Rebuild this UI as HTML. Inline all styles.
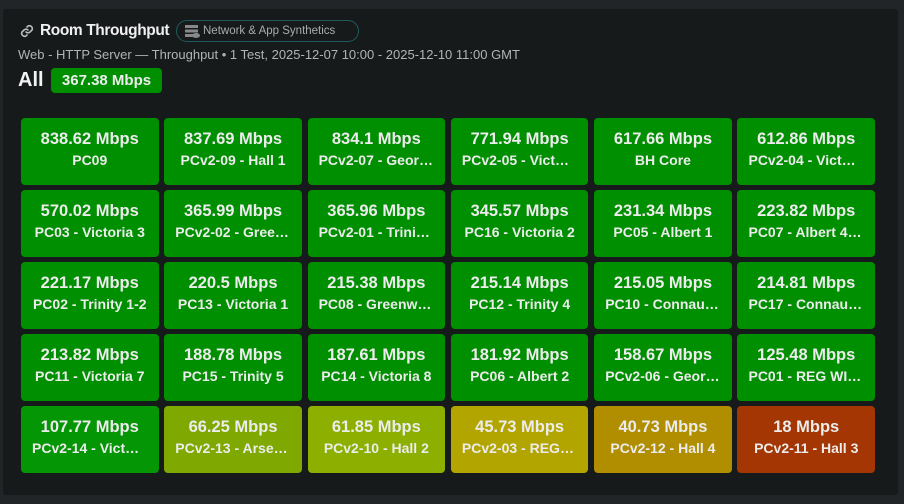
<!DOCTYPE html>
<html><head><style>
*{margin:0;padding:0;box-sizing:border-box}
body{width:904px;height:504px;background:#212527;font-family:"Liberation Sans",sans-serif;position:relative;overflow:hidden}
.panel{position:absolute;left:3px;top:9px;width:895px;height:486px;background:#171a1b;border-radius:3px}
.title{position:absolute;left:19px;top:22px;font-size:15.5px;letter-spacing:-0.4px;font-weight:bold;color:#f0f0f0;display:flex;align-items:center}
.chip{position:absolute;left:176px;top:20px;width:183px;height:22px;border:1px solid #1f5b5e;border-radius:11px;color:#a9acad;font-size:11.5px;line-height:20px;padding-left:26px}
.chip svg{position:absolute;left:8px;top:4px}
.sub{position:absolute;left:18px;top:47px;font-size:13px;color:#b3b3b3}
.all{position:absolute;left:18px;top:69px;font-size:20px;font-weight:bold;color:#f2f2f2}
.badge{position:absolute;left:51px;top:68px;width:111px;height:25px;background:#008f00;border-radius:4px;color:#eee;font-weight:bold;font-size:15px;line-height:25px;text-align:center}
.grid{position:absolute;left:21px;top:118px;display:grid;grid-template-columns:repeat(6,137.5px);grid-auto-rows:67px;column-gap:5.8px;row-gap:5px}
.t{border-radius:4px;color:#ececec;font-weight:bold;text-align:center;padding:0 11px;overflow:hidden}
.t .v{font-size:16.5px;margin-top:12px;white-space:nowrap}
.t .n{font-size:14px;margin-top:3px;white-space:nowrap;overflow:hidden;text-overflow:ellipsis}
.g{background:#008f00}
</style></head><body>
<div class="panel"></div>
<div class="title"><svg width="16" height="16" viewBox="0 0 16 16" style="margin-right:5px"><g fill="none" stroke="#bbb" stroke-width="1.6" stroke-linecap="round"><path d="M7 9a3 3 0 0 0 4 0l2-2a3 3 0 0 0-4-4l-1 1"/><path d="M9 7a3 3 0 0 0-4 0l-2 2a3 3 0 0 0 4 4l1-1"/></g></svg>Room Throughput</div>
<div class="chip"><svg width="15" height="13" viewBox="0 0 15 13"><rect x="0" y="0" width="13" height="3" fill="#888"/><rect x="0" y="4.5" width="13" height="3" fill="#888"/><rect x="0" y="9" width="8" height="3" fill="#888"/><ellipse cx="11" cy="10.5" rx="4" ry="2.5" fill="#888"/></svg>Network &amp; App Synthetics</div>
<div class="sub">Web - HTTP Server — Throughput • 1 Test, 2025-12-07 10:00 - 2025-12-10 11:00 GMT</div>
<div class="all">All</div>
<div class="badge">367.38 Mbps</div>
<div class="grid">
<div class="t g"><div class="v">838.62 Mbps</div><div class="n">PC09</div></div>
<div class="t g"><div class="v">837.69 Mbps</div><div class="n">PCv2-09 - Hall 1</div></div>
<div class="t g"><div class="v">834.1 Mbps</div><div class="n">PCv2-07 - George Street</div></div>
<div class="t g"><div class="v">771.94 Mbps</div><div class="n">PCv2-05 - Victoria 6</div></div>
<div class="t g"><div class="v">617.66 Mbps</div><div class="n">BH Core</div></div>
<div class="t g"><div class="v">612.86 Mbps</div><div class="n">PCv2-04 - Victoria 5</div></div>
<div class="t g"><div class="v">570.02 Mbps</div><div class="n">PC03 - Victoria 3</div></div>
<div class="t g"><div class="v">365.99 Mbps</div><div class="n">PCv2-02 - Greenwich</div></div>
<div class="t g"><div class="v">365.96 Mbps</div><div class="n">PCv2-01 - Trinity 3</div></div>
<div class="t g"><div class="v">345.57 Mbps</div><div class="n">PC16 - Victoria 2</div></div>
<div class="t g"><div class="v">231.34 Mbps</div><div class="n">PC05 - Albert 1</div></div>
<div class="t g"><div class="v">223.82 Mbps</div><div class="n">PC07 - Albert 4 and 5</div></div>
<div class="t g"><div class="v">221.17 Mbps</div><div class="n">PC02 - Trinity 1-2</div></div>
<div class="t g"><div class="v">220.5 Mbps</div><div class="n">PC13 - Victoria 1</div></div>
<div class="t g"><div class="v">215.38 Mbps</div><div class="n">PC08 - Greenwich 2</div></div>
<div class="t g"><div class="v">215.14 Mbps</div><div class="n">PC12 - Trinity 4</div></div>
<div class="t g"><div class="v">215.05 Mbps</div><div class="n">PC10 - Connaught 1</div></div>
<div class="t g"><div class="v">214.81 Mbps</div><div class="n">PC17 - Connaught 2</div></div>
<div class="t g"><div class="v">213.82 Mbps</div><div class="n">PC11 - Victoria 7</div></div>
<div class="t g"><div class="v">188.78 Mbps</div><div class="n">PC15 - Trinity 5</div></div>
<div class="t g"><div class="v">187.61 Mbps</div><div class="n">PC14 - Victoria 8</div></div>
<div class="t g"><div class="v">181.92 Mbps</div><div class="n">PC06 - Albert 2</div></div>
<div class="t g"><div class="v">158.67 Mbps</div><div class="n">PCv2-06 - George Street</div></div>
<div class="t g"><div class="v">125.48 Mbps</div><div class="n">PC01 - REG WIRELESS</div></div>
<div class="t" style="background:#049604"><div class="v">107.77 Mbps</div><div class="n">PCv2-14 - Victoria 4</div></div>
<div class="t" style="background:#7fa800"><div class="v">66.25 Mbps</div><div class="n">PCv2-13 - Arsenal</div></div>
<div class="t" style="background:#8db000"><div class="v">61.85 Mbps</div><div class="n">PCv2-10 - Hall 2</div></div>
<div class="t" style="background:#b3a500"><div class="v">45.73 Mbps</div><div class="n">PCv2-03 - REG Office</div></div>
<div class="t" style="background:#b08e00"><div class="v">40.73 Mbps</div><div class="n">PCv2-12 - Hall 4</div></div>
<div class="t" style="background:#a33602"><div class="v">18 Mbps</div><div class="n">PCv2-11 - Hall 3</div></div>
</div>
</body></html>
